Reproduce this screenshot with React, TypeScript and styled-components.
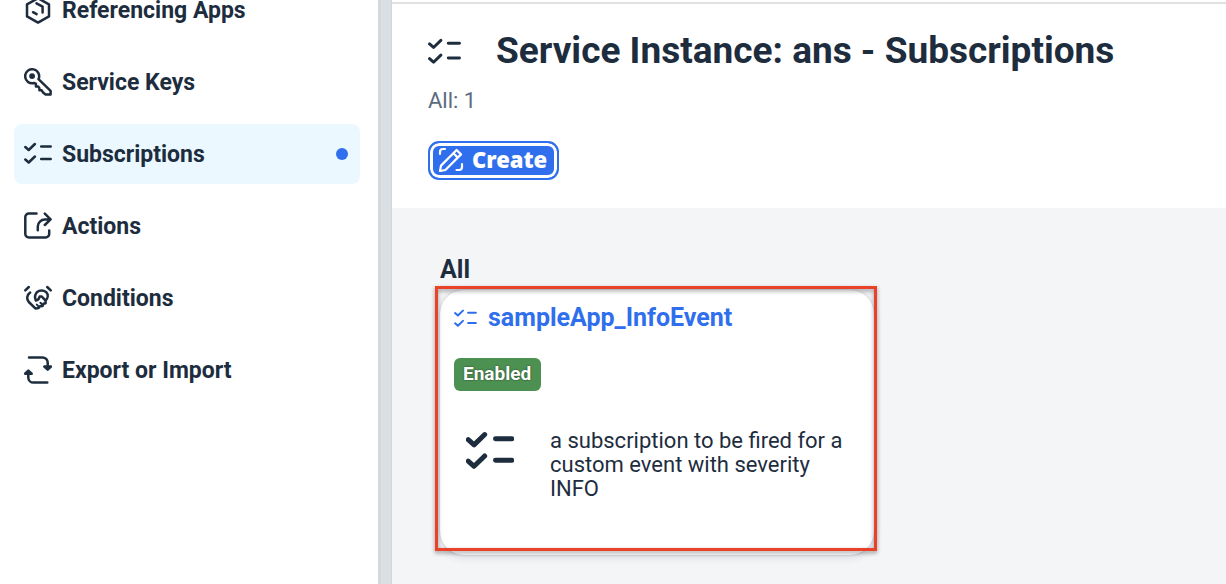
import React from 'react';
import styled, { createGlobalStyle } from 'styled-components';

const ink = '#1d2d3e';
const blue = '#2f6fed';

const GlobalStyle = createGlobalStyle`
  *, *::before, *::after { box-sizing: border-box; }
  html, body, #root { height: 100%; }
  body {
    margin: 0;
    overflow: hidden;
    background: #fff;
    color: ${ink};
    font-family: Roboto, 'Liberation Sans', sans-serif;
    font-size: 22px;
    line-height: 24px;
  }
  h1, h2, h3, p, ul { margin: 0; padding: 0; }
`;

const Shell = styled.div`
  display: grid;
  grid-template-columns: 378px 14px minmax(0, 1fr);
  height: 100%;
  overflow: hidden;
`;

const Sidebar = styled.nav`
  padding: 0 18px 0 14px;
  overflow: hidden;
`;

const NavList = styled.ul`
  display: flex;
  flex-direction: column;
  gap: 12px;
  margin-top: -20px;
  list-style: none;
`;

const NavLink = styled.a<{ $active?: boolean }>`
  display: flex;
  align-items: center;
  gap: 10px;
  height: 60px;
  padding: 0 12px 0 10px;
  border-radius: 8px;
  background: ${(p) => (p.$active ? '#ebf8ff' : 'transparent')};
  color: ${ink};
  font-size: 23px;
  font-weight: 700;
  text-decoration: none;
`;

const NavText = styled.span`
  flex: 1;
  padding-top: 2px;
`;

const ActiveDot = styled.span`
  width: 12px;
  height: 12px;
  border-radius: 50%;
  background: ${blue};
`;

const Divider = styled.div`
  background: #dadfe3;
  border-left: 3px solid #d4d8da;
  border-right: 1px solid #cfd6dc;
`;

const Main = styled.main`
  display: flex;
  flex-direction: column;
  background: #f4f5f7;
`;

const PageHeader = styled.header`
  display: flex;
  flex-direction: column;
  align-items: flex-start;
  margin-top: 2px;
  padding: 26px 36px 28px;
  border-top: 2px solid #e1e1e1;
  background: #fff;
  box-shadow: 0 -2px 0 #fff;
`;

const TitleRow = styled.div`
  display: flex;
  align-items: center;
  gap: 35px;
`;

const Title = styled.h1`
  font-size: 37px;
  line-height: 42px;
  font-weight: 700;
  white-space: nowrap;
`;

const Count = styled.p`
  margin-top: 17px;
  color: #5b6b80;
`;

const CreateButton = styled.button`
  display: flex;
  align-items: center;
  gap: 8px;
  height: 39px;
  margin-top: 28px;
  padding: 0 10px 3px 8px;
  border: 2px solid ${blue};
  border-radius: 11px;
  background: ${blue};
  box-shadow: inset 0 0 0 3px #fff;
  color: #fff;
  font: 900 22px/24px 'Noto Sans', Roboto, sans-serif;
`;

const Content = styled.section`
  display: flex;
  flex-direction: column;
  align-items: flex-start;
  padding: 50px 48px;
`;

const GroupTitle = styled.h2`
  font-size: 25px;
  line-height: 24px;
  font-weight: 700;
`;

const Card = styled.article`
  position: relative;
  width: 434px;
  min-height: 265px;
  margin-top: 8px;
  padding: 14px;
  border-radius: 24px;
  background: #fff;
  box-shadow: 0 0 2px rgba(34, 53, 72, 0.2), 0 2px 8px rgba(34, 53, 72, 0.14);
`;

const Highlight = styled.div`
  position: absolute;
  inset: -4px -3px 4px -5px;
  border: 3px solid #ea4128;
  filter: drop-shadow(0 2px 2px rgba(0, 0, 0, 0.4));
  pointer-events: none;
`;

const CardTitle = styled.h3`
  display: flex;
  align-items: center;
  gap: 11px;
  font-size: 25px;
  line-height: 28px;
  font-weight: 700;
`;

const CardLink = styled.a`
  color: ${blue};
  text-decoration: none;
`;

const Badge = styled.span`
  display: inline-block;
  margin-top: 26px;
  padding: 3px 10px 5px 9px;
  border-radius: 6px;
  background: #4d9152;
  color: #fff;
  font-size: 19px;
  line-height: 25px;
  font-weight: 700;
  text-shadow: 0 0 2px rgba(0, 0, 0, 0.6);
`;

const CardBody = styled.div`
  display: flex;
  gap: 36px;
  margin-top: 38px;
  padding: 0 16px 0 12px;
`;

const BodyIcon = styled.div`
  flex: none;
  display: flex;
  padding-top: 2px;
`;

type IconProps = { children: React.ReactNode };

const NavIcon = ({ children }: IconProps) => (
  <svg width="28" height="28" viewBox="0 0 28 28" fill="none" stroke={ink} strokeWidth="2.5" strokeLinecap="round" strokeLinejoin="round" aria-hidden="true">
    {children}
  </svg>
);

const checklistPaths = (
  <>
    <path d="M1.3 5L4.7 8L10.9 2" />
    <path d="M1.3 17.5L4.7 20.5L10.9 14.5" />
    <path d="M17.2 4.5H26.7M17.2 17H26.7" />
  </>
);

const Checklist = ({ size, color, stroke = 2.5 }: { size: number; color: string; stroke?: number }) => (
  <svg width={size} height={Math.round((size * 22) / 28)} viewBox="0 0 28 22" fill="none" stroke={color} strokeWidth={stroke} strokeLinecap="round" strokeLinejoin="round" aria-hidden="true">
    {checklistPaths}
  </svg>
);

const items: { label: string; active?: boolean; icon: React.ReactNode }[] = [
  {
    label: 'Referencing Apps',
    icon: (
      <>
        <path d="M14 2.2L25 8.4V20.4L14 26.6L3 20.4V8.4Z" />
        <path d="M12.5 7.4L18.6 10.6V16.6M9 16.2L12.6 18.2" />
      </>
    ),
  },
  {
    label: 'Service Keys',
    icon: (
      <>
        <path d="M14.5 11.2A7 7 0 1 0 10 15L11.9 15.6V18.6H14.2L15.4 20.2V22.2H17.6L18.8 24.2L21.6 26.6H26.6V22.8Z" />
        <circle cx="8.1" cy="8.1" r="2.9" fill={ink} stroke="none" />
      </>
    ),
  },
  { label: 'Subscriptions', active: true, icon: <g transform="translate(0 2)">{checklistPaths}</g> },
  {
    label: 'Actions',
    icon: (
      <>
        <path d="M12.5 1.5H4.8A3.5 3.5 0 0 0 1.3 5V22A3.5 3.5 0 0 0 4.8 25.5H21.7A3.5 3.5 0 0 0 25.2 22V18.5" />
        <path d="M13.8 18.3V14.4A7 7 0 0 1 20.8 7.6H26M20.8 1.6L26.6 7.4L20.8 13" />
      </>
    ),
  },
  {
    label: 'Conditions',
    icon: (
      <>
        <path d="M1.3 6.4L4.8 3M26.7 6.4L23.2 3" />
        <path d="M6.2 8.6C2.8 11 2.2 15 4.8 18L11.6 24.6L14.6 24L16 22.2L18.6 22L19.4 19.8L21.6 19.2V16.6C24 14.2 24.6 10.8 22.2 8.2C19.6 5.8 15.4 5.8 13 8.2C11 10.4 10.6 13.6 11.8 16.4C14.4 16.6 15.2 14.6 15.6 12.4L17.8 12.6L21.6 16.6" />
        <path d="M12.8 20.6L14.8 22.6M16.4 18.8L18.2 20.6" strokeWidth="2" />
      </>
    ),
  },
  {
    label: 'Export or Import',
    icon: (
      <>
        <path d="M5 1.4H18.5A5.2 5.2 0 0 1 23.7 6.6V12" />
        <path d="M20.3 10.5H27L23.7 13.6Z" fill={ink} />
        <path d="M23.3 26.6H9.5A5.2 5.2 0 0 1 4.3 21.4V16" />
        <path d="M1.1 17.7H7.7L4.3 14.6Z" fill={ink} />
      </>
    ),
  },
];

export default function App() {
  return (
    <>
      <GlobalStyle />
      <Shell>
        <Sidebar>
          <NavList>
            {items.map((item) => (
              <li key={item.label}>
                <NavLink href="#" $active={item.active} aria-current={item.active ? 'page' : undefined}>
                  <NavIcon>{item.icon}</NavIcon>
                  <NavText>{item.label}</NavText>
                  {item.active && <ActiveDot />}
                </NavLink>
              </li>
            ))}
          </NavList>
        </Sidebar>
        <Divider />
        <Main>
          <PageHeader>
            <TitleRow>
              <Checklist size={33} color={ink} />
              <Title>Service Instance: ans - Subscriptions</Title>
            </TitleRow>
            <Count>All: 1</Count>
            <CreateButton type="button">
              <svg width="26" height="26" viewBox="0 0 26 26" fill="none" stroke="#fff" strokeWidth="2.2" strokeLinecap="round" strokeLinejoin="round" aria-hidden="true">
                <path d="M2 25L3 19.6L18.6 4L23 8.4L7.4 24L2 25ZM15.4 7.2L19.8 11.6" />
                <path d="M2 8V6A3 3 0 0 1 5 3H7M24 18V21A3 3 0 0 1 21 24H18.5" />
              </svg>
              Create
            </CreateButton>
          </PageHeader>
          <Content>
            <GroupTitle>All</GroupTitle>
            <Card>
              <CardTitle>
                <Checklist size={23} color={blue} />
                <CardLink href="#">sampleApp_InfoEvent</CardLink>
              </CardTitle>
              <Badge>Enabled</Badge>
              <CardBody>
                <BodyIcon>
                  <Checklist size={48} color={ink} stroke={2.9} />
                </BodyIcon>
                <p>a subscription to be fired for a custom event with severity INFO</p>
              </CardBody>
              <Highlight />
            </Card>
          </Content>
        </Main>
      </Shell>
    </>
  );
}
